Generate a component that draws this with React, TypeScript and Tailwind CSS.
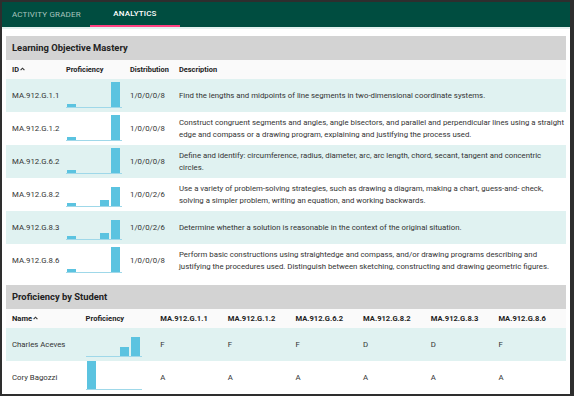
import React from "react";

type Objective = { id: string; dist: number[]; desc: string };

const objectives: Objective[] = [
  { id: "MA.912.G.1.1", dist: [1, 0, 0, 0, 8], desc: "Find the lengths and midpoints of line segments in two-dimensional coordinate systems." },
  { id: "MA.912.G.1.2", dist: [1, 0, 0, 0, 8], desc: "Construct congruent segments and angles, angle bisectors, and parallel and perpendicular lines using a straight edge and compass or a drawing program, explaining and justifying the process used." },
  { id: "MA.912.G.6.2", dist: [1, 0, 0, 0, 8], desc: "Define and identify: circumference, radius, diameter, arc, arc length, chord, secant, tangent and concentric circles." },
  { id: "MA.912.G.8.2", dist: [1, 0, 0, 2, 6], desc: "Use a variety of problem-solving strategies, such as drawing a diagram, making a chart, guess-and- check, solving a simpler problem, writing an equation, and working backwards." },
  { id: "MA.912.G.8.3", dist: [1, 0, 0, 2, 6], desc: "Determine whether a solution is reasonable in the context of the original situation." },
  { id: "MA.912.G.8.6", dist: [1, 0, 0, 0, 8], desc: "Perform basic constructions using straightedge and compass, and/or drawing programs describing and justifying the procedures used. Distinguish between sketching, constructing and drawing geometric figures." },
];

const students = [
  { name: "Charles Aceves", grades: ["F", "F", "F", "D", "D", "F"] },
  { name: "Cory Bagozzi", grades: ["A", "A", "A", "A", "A", "A"] },
];

const codes = objectives.map((o) => o.id);

function SortCaret() {
  return (
    <svg width="5" height="4" viewBox="0 0 5 4" className="ml-[1px] inline-block">
      <path d="M0.6 3.2 L2.5 1.2 L4.4 3.2" fill="none" stroke="#333" strokeWidth="1.1" />
    </svg>
  );
}

function MiniChart({ dist }: { dist: number[] }) {
  const total = dist.reduce((a, b) => a + b, 0);
  return (
    <div className="flex h-[28px] w-[56px] items-end gap-[2px] border-b border-[#9fd8e9] pl-[1px]">
      {dist.map((n, i) => (
        <div
          key={i}
          className="w-[9px] bg-[#5bc3e0]"
          style={{ height: total ? Math.round((n / total) * 28) : 0 }}
        />
      ))}
    </div>
  );
}

function SectionTitle({ children }: { children: React.ReactNode }) {
  return (
    <div className="flex h-[24px] items-center bg-[#d3d3d3] pl-[6px] text-[9.4px] font-bold text-[#222]">
      {children}
    </div>
  );
}

function gradeDist(grades: string[]) {
  return ["A", "B", "C", "D", "F"].map((g) => grades.filter((x) => x === g).length);
}

export default function App() {
  return (
    <div
      className="h-[396px] w-[574px] overflow-hidden bg-[#2e2e2e] pb-[2px] pl-[2px] pr-[4px] pt-[2px]"
      style={{ fontFamily: "Roboto, 'Liberation Sans', sans-serif" }}
    >
      <div className="flex h-full flex-col overflow-hidden bg-white">
        <div className="flex h-[25px] shrink-0 bg-[#004d40] text-[8px] uppercase tracking-[0.02em]">
          <div className="flex w-[88px] items-center pl-[10px] text-[#a9c5bf]">Activity Grader</div>
          <div className="flex w-[90px] items-center justify-center border-b-2 border-[#ff4081] font-medium text-white">
            Analytics
          </div>
        </div>
        <div className="h-[2px] shrink-0 bg-[#e3f1ef]" />
        <div className="flex flex-col px-[4px] pt-[7px]">
          <SectionTitle>Learning Objective Mastery</SectionTitle>
          <div className="flex h-[19px] items-center bg-[#fafafa] pl-[6px] text-[7.4px] font-bold text-[#222]">
            <div className="flex w-[54px] items-center">ID<SortCaret /></div>
            <div className="w-[64px]">Proficiency</div>
            <div className="w-[49px]">Distribution</div>
            <div>Description</div>
          </div>
          {objectives.map((o, i) => (
            <div
              key={o.id}
              className={`flex h-[33px] items-center pl-[6px] text-[7.8px] text-[#333] ${i % 2 === 0 ? "bg-[#e0f2f1]" : "bg-white"}`}
            >
              <div className="w-[54px]">{o.id}</div>
              <div className="flex h-full w-[64px] items-end pb-[4px]">
                <MiniChart dist={o.dist} />
              </div>
              <div className="w-[49px]">{o.dist.join("/")}</div>
              <div className="flex-1 pr-[2px] leading-[12px]">{o.desc}</div>
            </div>
          ))}
          <div className="h-[8px]" />
          <SectionTitle>Proficiency by Student</SectionTitle>
          <div className="flex h-[19px] items-center bg-[#fafafa] pl-[6px] text-[7.6px] font-bold text-[#222]">
            <div className="flex w-[74px] items-center">Name<SortCaret /></div>
            <div className="w-[75px]">Proficiency</div>
            {codes.map((c) => (
              <div key={c} className="w-[68px]">{c}</div>
            ))}
          </div>
          {students.map((s, i) => (
            <div
              key={s.name}
              className={`flex h-[33px] items-center pl-[6px] text-[7.8px] text-[#333] ${i % 2 === 0 ? "bg-[#e0f2f1]" : "bg-white"}`}
            >
              <div className="w-[74px]">{s.name}</div>
              <div className="flex h-full w-[75px] items-end pb-[4px]">
                <MiniChart dist={gradeDist(s.grades)} />
              </div>
              {s.grades.map((g, j) => (
                <div key={j} className="w-[68px]">{g}</div>
              ))}
            </div>
          ))}
        </div>
      </div>
    </div>
  );
}
